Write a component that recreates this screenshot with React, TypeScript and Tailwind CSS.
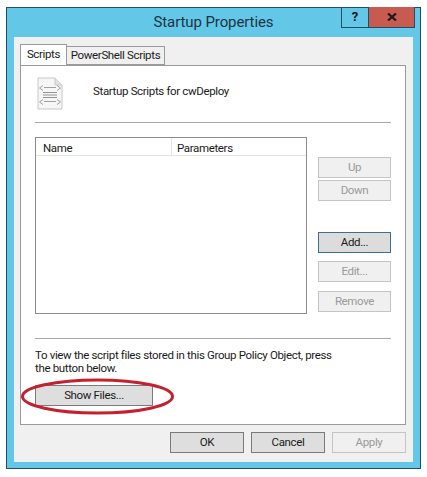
const font = "font-['Roboto',sans-serif]";

function Btn({ label, kind = "normal", className = "" }: { label: string; kind?: "normal" | "default" | "disabled"; className?: string }) {
  const look =
    kind === "disabled"
      ? "border-[#c4c4c4] bg-[#f0f0f0] text-[#9a9a9a]"
      : kind === "default"
        ? "border-[#3f6f90] bg-[#dcdcdc] text-[#1a1a1a]"
        : "border-[#7a7a7a] bg-[#dedede] text-[#1a1a1a]";
  return <div className={`flex h-[21px] items-center justify-center border pt-[1px] text-[11.5px] tracking-[-0.35px] ${look} ${className}`}>{label}</div>;
}

function ScriptIcon() {
  return (
    <svg width="26" height="33" viewBox="0 0 26 33" fill="none">
      <path d="M1 1H18L25 8V32H1Z" fill="#f6f6f6" stroke="#c8c8c8" />
      <path d="M18 1V8H25" fill="#e2e2e2" stroke="#c8c8c8" />
      <path d="M6 8.5L2.5 11L6 13.5M20 8.5L23.5 11L20 13.5M7 10.5H19" stroke="#8a8a8a" strokeWidth="0.8" />
      <path d="M6 15.5H20M6 18H20M6 20.5H20" stroke="#8a8a8a" strokeWidth="0.9" />
      <path d="M6 22.5L2.5 25L6 27.5M20 22.5L23.5 25L20 27.5M7 24.5H19" stroke="#8a8a8a" strokeWidth="0.8" />
    </svg>
  );
}

export default function App() {
  return (
    <div className={`h-[477px] w-[427px] bg-white pl-[6px] pt-[7px] ${font}`}>
      <div className="flex h-[462px] w-[415px] flex-col border border-[#1f4f63] bg-[#63c7e8] px-[7px] pb-[6px]">
        <div className="relative flex h-[29px] shrink-0 items-center justify-center text-[15px] tracking-[-0.1px] text-[#1c3440]">
          Startup Properties
          <div className="absolute right-[-2px] top-[-1px] flex h-[21px]">
            <div className="flex w-[28px] items-center justify-center border border-t-0 border-[#1f4f63] text-[13px] font-bold text-[#111]">?</div>
            <div className="flex w-[46px] items-center justify-center border-b border-r border-[#1f4f63] bg-[#c75b50]">
              <svg width="10" height="8" viewBox="0 0 10 8" fill="none">
                <path d="M1 0.5L9 7.5M9 0.5L1 7.5" stroke="#1a1a1a" strokeWidth="2.2" />
              </svg>
            </div>
          </div>
        </div>

        <div className="flex min-h-0 flex-1 flex-col bg-[#f0f0f0] px-[6px] pt-[8px]">
          <div className="relative z-10 flex h-[20px] items-end whitespace-nowrap text-[11.5px] tracking-[-0.35px] text-[#1a1a1a]">
            <div className="flex h-[21px] w-[47px] items-center justify-center border border-b-0 border-[#9a9a9a] bg-white">Scripts</div>
            <div className="flex h-[19px] w-[98px] items-center justify-center border border-l-0 border-[#9a9a9a] bg-[#f0f0f0]">PowerShell Scripts</div>
          </div>

          <div className="flex h-[360px] w-[386px] flex-col border border-[#9a9a9a] bg-white pl-[14px] pr-[14px] text-[11.5px] tracking-[-0.35px] text-[#1a1a1a]">
            <div className="flex h-[56px] items-start pl-[2px] pt-[11px]">
              <ScriptIcon />
              <div className="ml-[30px] pt-[6px]">Startup Scripts for cwDeploy</div>
            </div>
            <div className="h-px bg-[#a8a8a8]" />

            <div className="mt-[14px] flex">
              <div className="h-[177px] w-[272px] border border-[#8c8c8c]">
                <div className="flex h-[18px] border-b border-[#e4e4e4] leading-[20px]">
                  <div className="w-[136px] border-r border-[#e4e4e4] pl-[7px]">Name</div>
                  <div className="pl-[5px]">Parameters</div>
                </div>
              </div>
              <div className="ml-[11px] flex w-[73px] flex-col pt-[20px]">
                <Btn label="Up" kind="disabled" />
                <Btn label="Down" kind="disabled" className="mt-[2px]" />
                <Btn label="Add..." kind="default" className="mt-[31px]" />
                <Btn label="Edit..." kind="disabled" className="mt-[8px]" />
                <Btn label="Remove" kind="disabled" className="mt-[9px]" />
              </div>
            </div>

            <div className="mt-[24px] h-px bg-[#a8a8a8]" />
            <div className="mt-[10px] w-[300px] leading-[13px]">
              To view the script files stored in this Group Policy Object, press the button below.
            </div>
            <div className="relative mt-[10px] w-[118px]">
              <Btn label="Show Files..." />
              <svg className="absolute left-[-15px] top-[-7px]" width="155" height="37" viewBox="0 0 155 37" fill="none">
                <ellipse cx="77.5" cy="18.5" rx="75" ry="16.5" stroke="#c4202f" strokeWidth="3" />
              </svg>
            </div>
          </div>

          <div className="flex justify-end gap-[7px] pr-[1px] pt-[7px]">
            <Btn label="OK" className="w-[74px]" />
            <Btn label="Cancel" className="w-[74px]" />
            <Btn label="Apply" kind="disabled" className="w-[74px]" />
          </div>
        </div>
      </div>
    </div>
  );
}
